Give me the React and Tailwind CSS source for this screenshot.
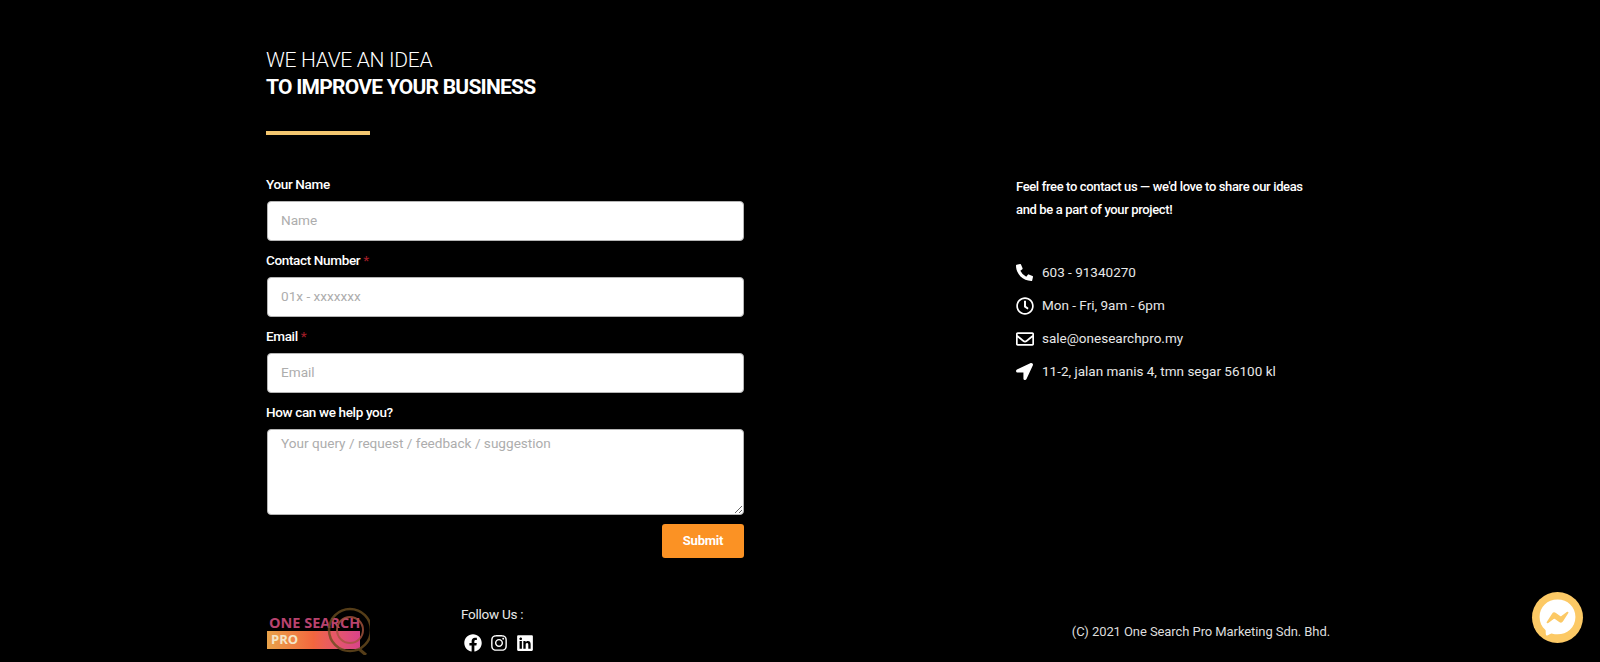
import React from "react";
import {
  FaPhoneAlt,
  FaRegClock,
  FaRegEnvelope,
  FaLocationArrow,
  FaFacebook,
  FaInstagram,
  FaLinkedin,
  FaFacebookMessenger,
} from "react-icons/fa";

const roboto = "font-['Roboto',sans-serif]";
const barlow = "font-['Roboto',sans-serif]";

// Label above each form field
const Label = ({ children, required }) => (
  <label className={`block h-[20px] leading-[20px] mb-[7px] text-[13.5px] font-medium text-white tracking-[-0.35px] ${roboto}`}>
    {children}
    {required && <span className="text-[#9c1c26]"> *</span>}
  </label>
);

const Input = ({ placeholder }) => (
  <input
    placeholder={placeholder}
    className={`block ml-[1px] w-[477px] h-[40px] bg-white border border-[#b5b5b5] rounded-[4px] px-[13px] pb-[2px] text-[13.6px] outline-none placeholder:text-[#adadad] ${roboto}`}
  />
);

const Field = ({ label, required, placeholder }) => (
  <div className="mb-[9px]">
    <Label required={required}>{label}</Label>
    <Input placeholder={placeholder} />
  </div>
);

const ContactRow = ({ icon, children }) => (
  <div className="flex items-center h-[33px]">
    <span className="w-[26px] flex items-center text-white">{icon}</span>
    <span className={`text-[13.5px] text-[#e8e8e8] ${barlow}`}>{children}</span>
  </div>
);

const Logo = () => (
  <div className="relative w-[104px] h-[50px]">
    <div className="absolute left-[3px] top-[9px] text-[14.5px] leading-[18px] font-bold text-[#b8436f] whitespace-nowrap font-['Open_Sans',sans-serif]">
      ONE SEARCH
    </div>
    <div className="absolute left-[1px] top-[26px] w-[93px] h-[18px] pl-[4px] bg-gradient-to-r from-[#e8a24a] via-[#f2663f] to-[#d9428a] text-[13px] leading-[17px] font-bold text-[#f4e6c8] font-['Open_Sans',sans-serif]">
      PRO
    </div>
    <svg viewBox="0 0 104 50" className="absolute inset-0 w-full h-full opacity-80">
      <g fill="none" stroke="#6b4d1f">
        <circle cx="84" cy="25" r="21" strokeWidth="2.5" />
        <circle cx="84" cy="25" r="13" strokeWidth="2" stroke="#a8553f" />
        <path d="M93 44l7 6" strokeWidth="3" />
      </g>
    </svg>
  </div>
);

export default function App() {
  return (
    <div className="relative h-[662px] overflow-hidden bg-black pl-[266px] pr-[270px] pt-[47px]">
      <div className="flex">
        {/* left column */}
        <div className="w-[478px]">
          <h2 className={`text-[21px] leading-[27px] font-light text-white tracking-[-0.3px] ${barlow}`}>WE HAVE AN IDEA</h2>
          <h2 className={`text-[21px] leading-[27px] font-bold text-white tracking-[-0.75px] ${barlow}`}>TO IMPROVE YOUR BUSINESS</h2>
          <div className="w-[104px] h-[4px] bg-[#f3c66f] mt-[30px] mb-[39px]" />

          <form>
            <Field label="Your Name" placeholder="Name" />
            <Field label="Contact Number" required placeholder="01x - xxxxxxx" />
            <Field label="Email" required placeholder="Email" />
            <Label>How can we help you?</Label>
            <textarea
              placeholder="Your query / request / feedback / suggestion"
              className={`block ml-[1px] w-[477px] h-[86px] bg-white border border-[#b5b5b5] rounded-[4px] px-[13px] py-[3px] text-[13.6px] outline-none placeholder:text-[#adadad] ${roboto}`}
            />
            <div className="flex justify-end mt-[9px]">
              <button
                type="button"
                className={`w-[82px] h-[34px] bg-[#fb9224] rounded-[3px] text-white text-[13px] font-bold tracking-[-0.2px] ${roboto}`}
              >
                Submit
              </button>
            </div>
          </form>
        </div>

        {/* right column */}
        <div className="ml-[272px] pt-[129px] flex-1">
          <p className={`text-[13px] leading-[22.5px] font-medium text-white tracking-[-0.36px] ${barlow}`}>
            Feel free to contact us — we'd love to share our ideas
            <br />
            and be a part of your project!
          </p>
          <div className="mt-[35px]">
            <ContactRow icon={<FaPhoneAlt size={17} />}>603 - 91340270</ContactRow>
            <ContactRow icon={<FaRegClock size={18} />}>Mon - Fri, 9am - 6pm</ContactRow>
            <ContactRow icon={<FaRegEnvelope size={18} />}>sale@onesearchpro.my</ContactRow>
            <ContactRow icon={<FaLocationArrow size={17} />}>11-2, jalan manis 4, tmn segar 56100 kl</ContactRow>
          </div>
        </div>
      </div>

      {/* footer */}
      <div className="flex items-start mt-[46px]">
        <div className="w-[195px] pt-[1px]">
          <Logo />
        </div>
        <div className="w-[300px]">
          <div className={`text-[13.5px] leading-[20px] text-[#e8e8e8] tracking-[-0.25px] ${barlow}`}>Follow Us :</div>
          <div className="flex items-center gap-[8px] mt-[10px] pl-[3px] text-white">
            <FaFacebook size={18} />
            <FaInstagram size={18} />
            <FaLinkedin size={18} />
          </div>
        </div>
        <div className={`flex-1 text-right pt-[18px] text-[13px] leading-[20px] text-[#dddddd] tracking-[-0.08px] ${barlow}`}>
          (C) 2021 One Search Pro Marketing Sdn. Bhd.
        </div>
      </div>

      {/* floating chat button */}
      <div className="absolute left-[1532px] top-[592px] w-[51px] h-[51px] rounded-full bg-[#fcc965] flex items-center justify-center text-white">
        <FaFacebookMessenger size={37} />
      </div>
    </div>
  );
}
